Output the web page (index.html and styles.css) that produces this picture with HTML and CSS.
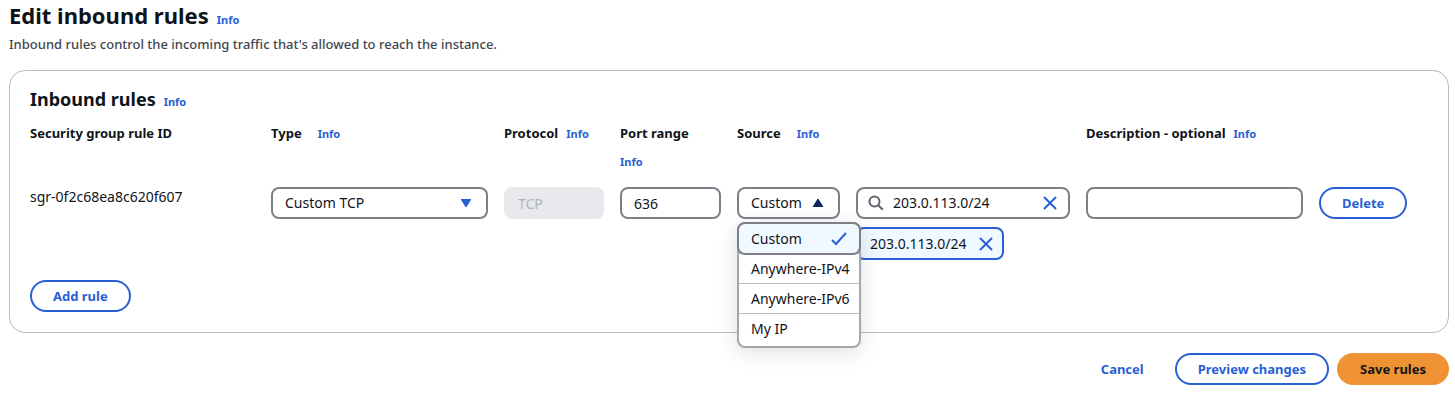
FILE: index.html
```html
<!DOCTYPE html>
<html lang="en">
<head>
<meta charset="utf-8">
<title>Edit inbound rules</title>
<link rel="stylesheet" href="styles.css">
</head>
<body>
<main class="page">
  <header class="page-header">
    <div class="title-row">
      <h1>Edit inbound rules</h1>
      <a class="info" href="#">Info</a>
    </div>
    <p class="description">Inbound rules control the incoming traffic that's allowed to reach the instance.</p>
  </header>

  <form>
    <section class="card">
      <div class="title-row">
        <h2>Inbound rules</h2>
        <a class="info" href="#">Info</a>
      </div>

      <div class="rules">
        <div class="head"><span class="label">Security group rule ID</span></div>
        <div class="head head-wide"><label class="label" for="type">Type</label><a class="info" href="#">Info</a></div>
        <div class="head"><label class="label" for="protocol">Protocol</label><a class="info" href="#">Info</a></div>
        <div class="head head-stacked"><label class="label" for="port">Port range</label><a class="info" href="#">Info</a></div>
        <div class="head head-wide head-source"><label class="label" for="source">Source</label><a class="info" href="#">Info</a></div>
        <div class="head head-description"><label class="label" for="description">Description - optional</label><a class="info" href="#">Info</a></div>

        <div class="rule-id">sgr-0f2c68ea8c620f607</div>
        <div class="select-box">
          <select class="control" id="type"><option>Custom TCP</option></select>
          <svg class="caret" viewBox="0 0 10 8"><path d="M0 0h10L5 8z"/></svg>
        </div>
        <input class="control" id="protocol" type="text" value="TCP" disabled>
        <input class="control" id="port" type="text" value="636">
        <div class="select-box">
          <select class="control" id="source"><option>Custom</option></select>
          <svg class="caret caret-open" viewBox="0 0 10 8"><path d="M0 8h10L5 0z"/></svg>
          <ul class="menu" role="listbox" aria-label="Source">
            <li class="option option-selected" role="option" aria-selected="true">Custom
              <svg class="check" viewBox="0 0 16 14"><path d="M1 8l4 4L15 1"/></svg>
            </li>
            <li class="option" role="option">Anywhere-IPv4</li>
            <li class="option" role="option">Anywhere-IPv6</li>
            <li class="option" role="option">My IP</li>
          </ul>
        </div>
        <div class="cidr">
          <div class="search">
            <svg class="search-icon" viewBox="0 0 16 16"><circle cx="6.5" cy="6.5" r="5"/><path d="M10.2 10.2l4.6 4.6"/></svg>
            <input class="search-input" type="text" value="203.0.113.0/24" aria-label="Source CIDR">
            <button class="close" type="button" aria-label="Clear"><svg viewBox="0 0 14 14"><path d="M1 1l12 12M13 1L1 13"/></svg></button>
          </div>
          <div class="token">
            <span>203.0.113.0/24</span>
            <button class="close" type="button" aria-label="Remove 203.0.113.0/24"><svg viewBox="0 0 14 14"><path d="M1 1l12 12M13 1L1 13"/></svg></button>
          </div>
        </div>
        <input class="control" id="description" type="text">
        <button class="button button-delete" type="button">Delete</button>
      </div>

      <button class="button button-add" type="button">Add rule</button>
    </section>

    <footer class="actions">
      <button class="button button-link" type="button">Cancel</button>
      <button class="button" type="button">Preview changes</button>
      <button class="button button-primary" type="submit">Save rules</button>
    </footer>
  </form>
</main>
</body>
</html>
```
FILE: styles.css
```css
* {
  box-sizing: border-box;
}

body {
  margin: 0;
  background: #fff;
  color: #0f141a;
  font: 14px/20px "Noto Sans", "Open Sans", sans-serif;
}

h1,
h2,
p,
ul {
  margin: 0;
  padding: 0;
}

h1 {
  font-size: 22px;
  line-height: 30px;
  font-weight: 700;
}

h2 {
  font-size: 18px;
  line-height: 24px;
  font-weight: 700;
}

.page {
  padding: 0 6px 20px 9px;
}

.title-row {
  display: flex;
  align-items: baseline;
  gap: 8px;
}

.info {
  color: #295fd6;
  font-size: 11px;
  font-weight: 700;
  line-height: 20px;
  text-decoration: none;
}

.description {
  margin-top: 4px;
  color: #424650;
  font-size: 13px;
  font-weight: 500;
}

.card {
  margin-top: 16px;
  padding: 16px 20px 20px;
  border: 1px solid #b6bac2;
  border-radius: 16px;
}

.rules {
  display: grid;
  grid-template-columns: 225fr 217fr 100fr 101fr 103fr 214fr 217fr 109fr;
  column-gap: 16px;
  margin-top: 11px;
}

.rules > * {
  min-width: 0;
}

.head {
  display: flex;
  align-items: baseline;
  gap: 8px;
  padding-bottom: 15px;
  white-space: nowrap;
}

.head-wide {
  gap: 16px;
}

.head-stacked {
  flex-direction: column;
  gap: 9px;
}

.head-source,
.head-description {
  grid-column: span 2;
}

.label {
  font-size: 13px;
  font-weight: 700;
}

.rule-id {
  font-size: 14px;
}

.control {
  display: block;
  width: 100%;
  height: 32px;
  margin: 0;
  padding: 0 12px;
  border: 2px solid #7d8088;
  border-radius: 8px;
  background: #fff;
  color: #0f141a;
  font: inherit;
  appearance: none;
}

.control:disabled {
  border-color: #e8e8ed;
  background: #e8e8ed;
  color: #b1b4bb;
  opacity: 1;
}

.select-box {
  position: relative;
}

.caret {
  position: absolute;
  top: 12px;
  right: 17px;
  width: 10px;
  height: 8px;
  fill: #295fd6;
  stroke: #295fd6;
  pointer-events: none;
}

.caret-open {
  fill: #10255c;
  stroke: #10255c;
}

.menu {
  position: absolute;
  z-index: 2;
  top: 35px;
  left: 0;
  width: 124px;
  border: 2px solid #a4a7ae;
  border-radius: 8px;
  background: #fff;
  box-shadow: 0 4px 20px 1px rgba(0, 7, 22, 0.12);
  list-style: none;
}

.option {
  height: 30px;
  padding: 5px 12px;
  border-top: 1px solid #b6bac2;
  white-space: nowrap;
}

.option:last-child {
  height: 33px;
}

.option-selected {
  position: relative;
  display: flex;
  align-items: center;
  justify-content: space-between;
  height: 33px;
  margin: -2px;
  border: 2px solid #7d8088;
  border-radius: 8px;
  background: #f0f9ff;
}

.check {
  width: 16px;
  height: 14px;
  fill: none;
  stroke: #295fd6;
  stroke-width: 2;
}

.search {
  display: flex;
  align-items: center;
  gap: 9px;
  height: 32px;
  padding: 0 11px 0 10px;
  border: 2px solid #7d8088;
  border-radius: 8px;
}

.search-icon {
  flex: none;
  width: 16px;
  height: 16px;
  fill: none;
  stroke: #5f6370;
  stroke-width: 2;
}

.search-input {
  flex: 1;
  min-width: 0;
  padding: 0;
  border: 0;
  background: none;
  color: inherit;
  font: inherit;
}

.close {
  flex: none;
  width: 14px;
  height: 14px;
  padding: 0;
  border: 0;
  background: none;
}

.close svg {
  display: block;
  fill: none;
  stroke: #295fd6;
  stroke-width: 2;
}

.token {
  display: inline-flex;
  align-items: center;
  gap: 12px;
  height: 33px;
  margin-top: 8px;
  padding: 0 9px 0 12px;
  border: 2px solid #295fd6;
  border-radius: 8px;
  background: #f0f9ff;
}

.button {
  height: 32px;
  padding: 0 21px;
  border: 2px solid #295fd6;
  border-radius: 16px;
  background: #fff;
  color: #295fd6;
  font: 700 13px/20px "Noto Sans", "Open Sans", sans-serif;
  white-space: nowrap;
}

.button-delete {
  justify-self: start;
}

.button-add {
  display: block;
  margin-top: 20px;
}

.button-link {
  border-color: transparent;
  background: none;
}

.button-primary {
  border-color: #ef9234;
  background: #ef9234;
  color: #0f141a;
}

.actions {
  display: flex;
  justify-content: flex-end;
  gap: 8px;
  margin-top: 20px;
}
```
